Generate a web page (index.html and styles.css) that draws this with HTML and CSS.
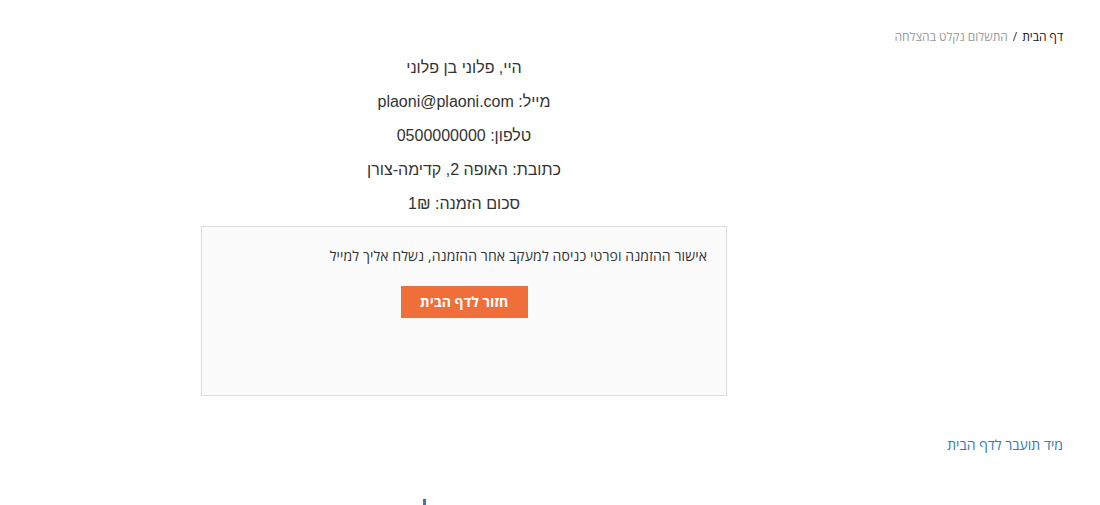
FILE: index.html
```html
<!DOCTYPE html>
<html lang="he" dir="rtl">
<head>
    <meta charset="UTF-8">
    <meta name="viewport" content="width=device-width, initial-scale=1.0">
    <title>התשלום נקלט בהצלחה</title>
    <link rel="stylesheet" href="styles.css">
</head>
<body>
    <div class="page">
        <nav class="breadcrumb">
            <a href="#" class="crumb-home">דף הבית</a>
            <span class="crumb-sep">/</span>
            <span class="crumb-current">התשלום נקלט בהצלחה</span>
        </nav>

        <div class="order-col">
            <div class="details">
                <p>היי, פלוני בן פלוני</p>
                <p>מייל: plaoni@plaoni.com</p>
                <p>טלפון: 0500000000</p>
                <p>כתובת: האופה 2, קדימה-צורן</p>
                <p>סכום הזמנה: 1₪</p>
            </div>

            <div class="confirm-box">
                <p class="confirm-text">אישור ההזמנה ופרטי כניסה למעקב אחר ההזמנה, נשלח אליך למייל</p>
                <a href="#" class="btn-home">חזור לדף הבית</a>
            </div>
        </div>

        <a href="#" class="redirect-link">מיד תועבר לדף הבית</a>

        <div class="loader-wrap"><span class="loader"></span></div>
    </div>
</body>
</html>
```

FILE: styles.css
```css
/* CSS START */
body {
    margin: 0;
    font-family: "Liberation Sans", Arial, sans-serif;
    background-color: #ffffff;
    color: #333333;
    overflow: hidden;
}

.page {
    padding: 29px 37px 0 37px;
}

.breadcrumb {
    font-family: "Open Sans", "DejaVu Sans", sans-serif;
    font-size: 12px;
    line-height: 16px;
    display: flex;
    gap: 5px;
}

.crumb-home {
    color: #111111;
    text-decoration: none;
}

.crumb-sep {
    color: #333333;
}

.crumb-current {
    color: #999999;
}

.order-col {
    width: 526px;
    margin-right: 336px;
    margin-top: 13px;
}

.details {
    text-align: center;
    font-size: 16px;
}

.details p {
    margin: 0 0 15px 0;
    line-height: 19px;
}

.details p:last-child {
    margin-bottom: 0;
}

.confirm-box {
    margin-top: 13px;
    height: 170px;
    box-sizing: border-box;
    border: 1px solid #dddddd;
    background-color: #fbfbfb;
    padding: 19px 19px 0 19px;
    text-align: center;
}

.confirm-text {
    font-family: "Open Sans", "DejaVu Sans", sans-serif;
    font-size: 14px;
    line-height: 20px;
    letter-spacing: 0.1px;
    margin: 0 0 20px 0;
    text-align: right;
    color: #333333;
}

.btn-home {
    display: inline-block;
    width: 127px;
    height: 32px;
    line-height: 32px;
    background-color: #ef6e3a;
    color: #ffffff;
    font-family: "Open Sans", "DejaVu Sans", sans-serif;
    font-weight: bold;
    font-size: 14px;
    text-decoration: none;
}

.redirect-link {
    display: block;
    margin-top: 39px;
    font-family: "Open Sans", "DejaVu Sans", sans-serif;
    font-size: 14px;
    line-height: 20px;
    color: #337ab7;
    text-decoration: none;
}

.loader-wrap {
    width: 526px;
    margin-right: 336px;
    margin-top: 44px;
    display: flex;
    justify-content: center;
}

.loader {
    display: block;
    width: 3px;
    height: 10px;
    background-color: #337ab7;
    margin-right: 80px;
}
/* CSS END */
```
